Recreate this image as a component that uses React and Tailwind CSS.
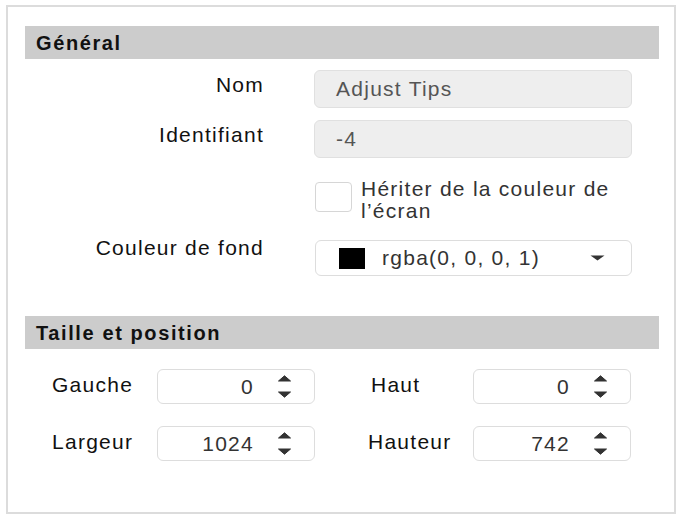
import React from "react";

// ---------------- SMALL PIECES ----------------
const Spinner = () => (
  <svg width="15" height="23" viewBox="0 0 15 23" className="shrink-0">
    <path d="M1.5 6 L7.5 0.8 L13.5 6 Z" fill="#333" stroke="#333" strokeWidth="1" strokeLinejoin="round" />
    <path d="M1.5 17 L13.5 17 L7.5 22.2 Z" fill="#333" stroke="#333" strokeWidth="1" strokeLinejoin="round" />
  </svg>
);

const Caret = () => (
  <svg width="15" height="6" viewBox="0 0 15 6" className="shrink-0">
    <path d="M0.5 0.5 L14.5 0.5 L7.5 5.5 Z" fill="#333" />
  </svg>
);

const SectionHeader = ({ title }) => (
  <div className="h-[33px] bg-[#cccccc] pl-[11px] flex items-center text-[20px] font-bold tracking-[0.08em] text-[#111]">
    {title}
  </div>
);

const ReadOnlyField = ({ value }) => (
  <div className="h-[38px] w-[318px] bg-[#eeeeee] border-[1.5px] border-[#e0e0e0] rounded-[6px] flex items-center pl-[21px] text-[#555]">
    {value}
  </div>
);

const NumberField = ({ value }) => (
  <div className="h-[35px] w-[158px] bg-white border-[1.5px] border-[#dddddd] rounded-[6px] flex items-center justify-end pr-[22px] gap-[23px] text-[#333]">
    <span>{value}</span>
    <Spinner />
  </div>
);

// ---------------- MAIN COMPONENT ----------------
const App = () => {
  const rows = [
    [
      { label: "Gauche", value: "0", pad: "pl-0" },
      { label: "Haut", value: "0", pad: "pl-[56px]" },
    ],
    [
      { label: "Largeur", value: "1024", pad: "pl-0" },
      { label: "Hauteur", value: "742", pad: "pl-[53px]" },
    ],
  ];

  return (
    <div
      className="pt-[5px] pl-[6px] bg-white min-h-screen text-[21px] leading-[24px] tracking-[0.06em] text-[#111]"
      style={{ fontFamily: '"Liberation Sans", Arial, sans-serif' }}
    >
      <div className="w-[670px] h-[509px] border-2 border-[#dcdcdc] pt-[19px] pl-[17px] pr-[15px]">
        {/* GENERAL */}
        <SectionHeader title="Général" />

        <div className="grid grid-cols-[239px_318px] gap-x-[50px] items-start">
          <div className="text-right mt-[14px]">Nom</div>
          <div className="mt-[11px]">
            <ReadOnlyField value="Adjust Tips" />
          </div>

          <div className="text-right mt-[15px]">Identifiant</div>
          <div className="mt-[12px]">
            <ReadOnlyField value="-4" />
          </div>

          <div />
          <div className="mt-[20px] flex items-start gap-[9px]">
            <div className="mt-[4px] ml-[1px] w-[37px] h-[30px] shrink-0 bg-white border-[1.5px] border-[#d6d6d6] rounded-[4px]" />
            <div className="leading-[22px] text-[#333]">Hériter de la couleur de l’écran</div>
          </div>

          <div className="text-right mt-[14px]">Couleur de fond</div>
          <div className="mt-[18px] h-[36px] ml-[1px] bg-white border-[1.5px] border-[#dddddd] rounded-[6px] flex items-center pl-[23px] pr-[26px] text-[#333]">
            <div className="w-[26px] h-[21px] bg-black shrink-0" />
            <span className="ml-[17px]">rgba(0, 0, 0, 1)</span>
            <span className="ml-auto">
              <Caret />
            </span>
          </div>
        </div>

        {/* SIZE AND POSITION */}
        <div className="mt-[40px]">
          <SectionHeader title="Taille et position" />
        </div>

        <div className="pl-[27px]">
          {rows.map((row, i) => (
            <div key={i} className={`flex items-start ${i === 0 ? "mt-[20px]" : "mt-[22px]"}`}>
              <div className="w-[105px] mt-[4px]">{row[0].label}</div>
              <NumberField value={row[0].value} />
              <div className={`w-[158px] mt-[4px] ${row[1].pad}`}>{row[1].label}</div>
              <NumberField value={row[1].value} />
            </div>
          ))}
        </div>
      </div>
    </div>
  );
};

export default App;
